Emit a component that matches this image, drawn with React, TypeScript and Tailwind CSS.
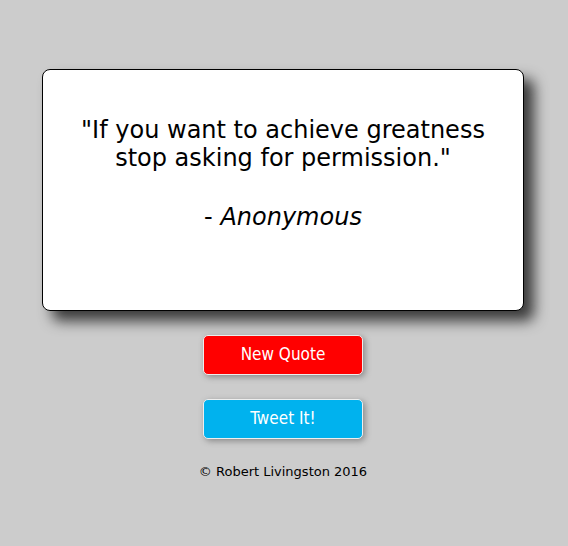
export default function App() {
  return (
    <div className="min-h-[546px] w-full bg-[#cccccc] flex flex-col items-center pt-[69px] pr-[2px] font-['DejaVu_Sans',sans-serif] text-black">
      {/* Quote card */}
      <div className="w-[482px] h-[242px] bg-white border border-black rounded-[8px] shadow-[10px_10px_14px_#3a3a3a] px-8 pt-[46px] text-center">
        <p className="text-[24px] leading-[28px]">
          "If you want to achieve greatness stop asking for permission."
        </p>
        <p className="text-[24px] leading-[28px] mt-[31px]">
          - <em>Anonymous</em>
        </p>
      </div>

      {/* Buttons */}
      <div className="flex flex-col items-center gap-[24px] mt-[24px]">
        <button className="w-[160px] h-[40px] rounded-[5px] bg-[#ff0000] text-white border border-[#eeeeee] shadow-[2px_2px_6px_#888] text-[17px] font-['DejaVu_Sans_Condensed','DejaVu_Sans',sans-serif]">
          New Quote
        </button>
        <button className="w-[160px] h-[40px] rounded-[5px] bg-[#00b2ee] text-white border border-[#eeeeee] shadow-[2px_2px_6px_#888] text-[17px] font-['DejaVu_Sans_Condensed','DejaVu_Sans',sans-serif]">
          Tweet It!
        </button>
      </div>

      <p className="mt-[25px] text-[13px] leading-[16px]">© Robert Livingston 2016</p>
    </div>
  );
}
